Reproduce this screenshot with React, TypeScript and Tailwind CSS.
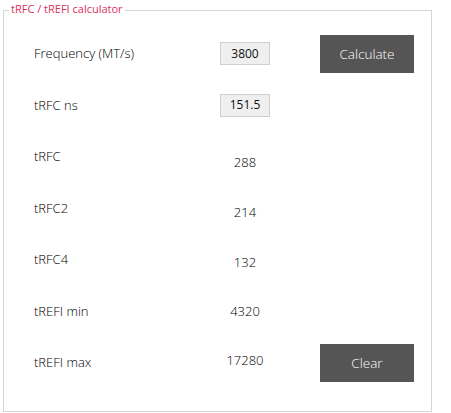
import React from "react";

const font = { fontFamily: '"Open Sans", "Noto Sans", sans-serif' };

function Row({ label, children, right, valueOffset = 0 }: { label: string; children?: React.ReactNode; right?: React.ReactNode; valueOffset?: number }) {
  return (
    <div className="flex h-[51.5px] items-center">
      <div className="w-[191px] pl-[30px] text-[13px] font-light text-black">{label}</div>
      <div className="flex w-[100px] justify-center" style={{ marginTop: valueOffset }}>{children}</div>
      <div className="ml-[25px] w-[94px]">{right}</div>
    </div>
  );
}

function Input({ value }: { value: string }) {
  return (
    <div className="flex h-[23px] w-[50px] items-center justify-center border border-[#cfcfcf] bg-[#efefef] text-[12px] text-[#111]">
      {value}
    </div>
  );
}

function Btn({ text }: { text: string }) {
  return (
    <div className="flex h-[38px] w-[94px] items-center justify-center bg-[#555555] text-[13.5px] font-light text-white">{text}</div>
  );
}

export default function App() {
  return (
    <div className="h-[413px] w-[451px] bg-white" style={font}>
      <div className="relative ml-[3px] mt-[10px] h-[402px] w-[429px] border border-[#d6d6d6] pt-[17px]">
        <div className="absolute left-[5px] top-[-9px] bg-white px-[2px] text-[11px] leading-[14px] text-[#dc2f5c]">
          tRFC / tREFI calculator
        </div>
        <Row label="Frequency (MT/s)" right={<Btn text="Calculate" />}>
          <Input value="3800" />
        </Row>
        <Row label="tRFC ns">
          <Input value="151.5" />
        </Row>
        <Row label="tRFC" valueOffset={12}>
          <span className="text-[13px] font-light text-black">288</span>
        </Row>
        <Row label="tRFC2" valueOffset={8}>
          <span className="text-[13px] font-light text-black">214</span>
        </Row>
        <Row label="tRFC4" valueOffset={6}>
          <span className="text-[13px] font-light text-black">132</span>
        </Row>
        <Row label="tREFI min">
          <span className="text-[13px] font-light text-black">4320</span>
        </Row>
        <Row label="tREFI max" right={<Btn text="Clear" />} valueOffset={-4}>
          <span className="text-[13px] font-light text-black">17280</span>
        </Row>
      </div>
    </div>
  );
}
